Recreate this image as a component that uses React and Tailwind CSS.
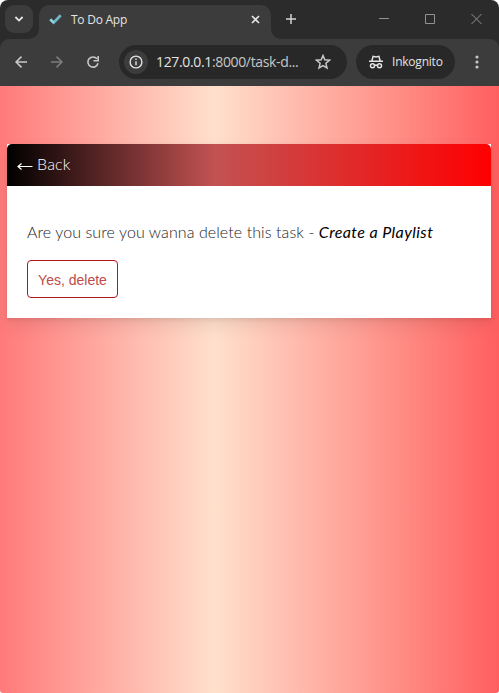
import React from "react";

function TabStrip() {
  return (
    <div className="flex h-[39px] items-start bg-[#2b2b2b] text-[#e3e3e3]">
      <button className="ml-[5px] mt-[5px] flex h-7 w-7 items-center justify-center rounded-[9px] bg-[#3c3c3c]">
        <svg width="10" height="6" viewBox="0 0 10 6" fill="none" stroke="currentColor" strokeWidth="1.8"><path d="M1.4 1 5 4.6 8.6 1" /></svg>
      </button>
      <div className="relative ml-[6px] mt-[5px] flex h-[34px] w-[232px] items-center rounded-t-[10px] bg-[#3c3c3c] pb-[5px] pl-[10px] pr-[11px]">
        <svg className="absolute bottom-0 -left-[10px]" width="10" height="10" viewBox="0 0 10 10"><path d="M10 0v10H0A10 10 0 0 0 10 0" fill="#3c3c3c" /></svg>
        <svg className="absolute bottom-0 -right-[10px]" width="10" height="10" viewBox="0 0 10 10"><path d="M0 0v10h10A10 10 0 0 1 0 0" fill="#3c3c3c" /></svg>
        <svg width="13" height="11" viewBox="0 0 13 11" fill="none"><path d="M1.3 5.4 4.7 8.7 11.7 1.3" stroke="#70b8c8" strokeWidth="2.7" /><path d="m1.3 5.4 3.4 3.3" stroke="#8fd5e4" strokeWidth="2.4" /></svg>
        <span className="ml-[9px] whitespace-nowrap text-[12px] leading-4 tracking-[-0.25px]">To Do App</span>
        <svg className="ml-auto" width="9" height="9" viewBox="0 0 9 9" stroke="currentColor" strokeWidth="1.7"><path d="m1 1 7 7M8 1 1 8" /></svg>
      </div>
      <svg className="ml-[15px] mt-[14px]" width="10" height="10" viewBox="0 0 10 10" stroke="#d4d4d4" strokeWidth="1.5"><path d="M5 0v10M0 5h10" /></svg>
      <div className="ml-auto mr-[17px] mt-[14px] flex gap-9 text-[#929292]">
        <svg width="10" height="10" viewBox="0 0 10 10" stroke="currentColor"><path d="M0 4.5h10" /></svg>
        <svg width="10" height="10" viewBox="0 0 10 10" fill="none" stroke="currentColor"><path d="M.5.5h9v9h-9z" /></svg>
        <svg width="11" height="10" viewBox="0 0 11 10" stroke="currentColor"><path d="m.5 0 10 10M10.500 0l-10 10" /></svg>
      </div>
    </div>
  );
}

function Toolbar() {
  return (
    <div className="bg-[#2b2b2b]">
      <div className="flex h-[47px] items-center rounded-t-[9px] bg-[#3c3c3c] pb-[1px] text-[#e3e3e3]">
        <svg className="ml-[15px] text-[#c7c7c7]" width="12" height="12" viewBox="0 0 12 12" fill="none" stroke="currentColor" strokeWidth="1.6"><path d="M12 6H1.200M6.500.6 1.100 6l5.400 5.400" /></svg>
        <svg className="ml-[24px] text-[#7c7c7c]" width="12" height="12" viewBox="0 0 12 12" fill="none" stroke="currentColor" strokeWidth="1.6"><path d="M0 6h10.800M5.500.6l5.400 5.400-5.400 5.400" /></svg>
        <svg className="ml-[24px] text-[#c7c7c7]" width="12" height="12" viewBox="0 0 12 12" fill="none" stroke="currentColor" strokeWidth="1.6"><path d="M10 2.800A5.100 5.100 0 1 0 11 7.300M11.200 0v4.700H6.500" /></svg>
        <div className="ml-[20px] flex h-[34px] w-[228px] items-center rounded-full bg-[#282828] pl-[5px] pr-4">
          <span className="flex h-6 w-6 shrink-0 items-center justify-center rounded-full bg-[#3c3c3c]">
            <svg width="14" height="14" viewBox="0 0 14 14" fill="none" stroke="currentColor" strokeWidth="1.4"><circle cx="7" cy="7" r="5.900" /><path d="M7 6.300v4M7 3.500v1.500" /></svg>
          </span>
          <span className="ml-2 whitespace-nowrap text-[14px] leading-5 tracking-[-0.35px]">127.0.0.1<span className="text-[#c7c7c7]">:8000/task-d...</span></span>
          <svg className="ml-auto shrink-0 text-[#c7c7c7]" width="16" height="16" viewBox="0 0 16 16" fill="none" stroke="currentColor" strokeWidth="1.5"><path d="m8 1.500 1.800 4.300 4.700.4-3.600 3.100 1.100 4.600L8 11.500l-4 2.400 1.100-4.600-3.600-3.100 4.700-.4z" /></svg>
        </div>
        <div className="ml-[9px] flex h-[34px] w-[99px] items-center rounded-full bg-[#282828] pl-[13px]">
          <svg width="14" height="14" viewBox="0 0 14 14" fill="none" stroke="currentColor" strokeWidth="1.5"><path d="M0 6.300h14M2.800 6l1.300-4.700L7 2l2.900-.7L11.200 6" /><circle cx="3.500" cy="10.800" r="2" /><circle cx="10.500" cy="10.800" r="2" /><path d="M5.500 10.500q1.500-.8 3 0" /></svg>
          <span className="ml-[9px] text-[12px] leading-4 tracking-[-0.22px]">Inkognito</span>
        </div>
        <svg className="ml-5" width="4" height="14" viewBox="0 0 4 14" fill="#c7c7c7"><circle cx="2" cy="2" r="1.600" /><circle cx="2" cy="7" r="1.600" /><circle cx="2" cy="12" r="1.600" /></svg>
      </div>
    </div>
  );
}

export default function App() {
  return (
    <div className="flex h-[693px] w-[499px] flex-col overflow-hidden rounded-t-[8px] rounded-b-[3px] font-['Open_Sans','Noto_Sans',sans-serif]">
      <TabStrip />
      <Toolbar />
      <main className="flex-1 bg-[linear-gradient(90deg,#ff7a7a_0%,#ffe0cc_43%,#ff5f5f_100%)] px-[7px] pt-[58px] pr-[8px]">
        <section className="h-[174px] w-[484px] bg-white font-['Lato',sans-serif] font-light shadow-[0_2px_4px_rgba(0,0,0,0.08),0_8px_16px_rgba(0,0,0,0.08)]">
          <header className="flex h-[42px] items-center rounded-t-[5px] bg-[linear-gradient(90deg,#000_0%,#c35252_43%,#f00_100%)] pl-[10px] text-white">
            <svg className="mt-[3px]" width="16" height="9" viewBox="0 0 16 9" fill="none" stroke="currentColor" strokeWidth="1.200"><path d="M15.500 4.500H1M4.500 1.500 1 4.500l3.500 3" /></svg>
            <a className="-mt-[2px] ml-1 text-[16px] leading-5 tracking-[0.2px]">Back</a>
          </header>
          <div className="px-5 pt-[35px]">
            <p className="flex whitespace-pre text-[16px] leading-[22px] text-[#1c1c1c]">
              <span className="tracking-[0.08px]">Are you sure you wanna delete this task - </span>
              <em className="font-normal tracking-[0.41px] text-black">Create a Playlist</em>
            </p>
            <button className="mt-[17px] flex h-[38px] w-[91px] items-center justify-center rounded-[4px] border border-[#b0161c] pt-[2px] font-['Liberation_Sans',sans-serif] text-[14px] font-normal text-[#bd4b4b]">Yes, delete</button>
          </div>
        </section>
      </main>
    </div>
  );
}
